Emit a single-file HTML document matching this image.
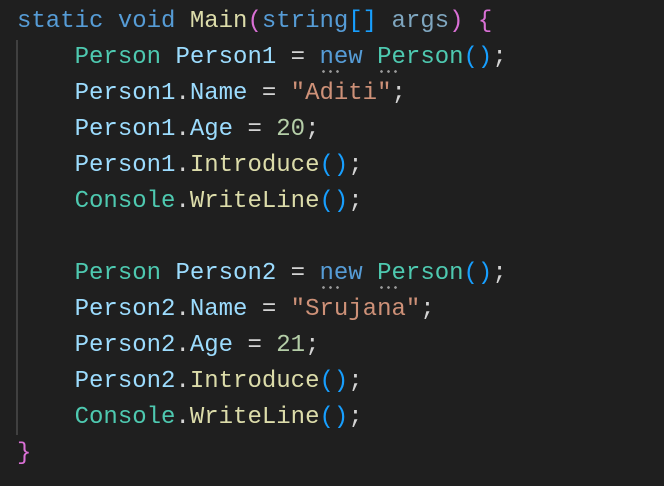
<!DOCTYPE html>
<html><head><meta charset="utf-8"><style>
html,body{margin:0;padding:0;background:#1f1f1f;width:664px;height:486px;overflow:hidden}
pre{margin:0;position:absolute;left:17px;top:4px;font-family:"Liberation Mono","DejaVu Sans Mono",monospace;font-size:24px;line-height:36px;color:#d4d4d4}
.k{color:#569cd6}.t{color:#4ec9b0}.v{color:#9cdcfe}.f{color:#dcdcaa}.s{color:#ce9178}.n{color:#b5cea8}
.p{color:#da70d6}.b{color:#179fff}.d{color:#7fa6bf}
.u{position:relative}.u::after{content:"";position:absolute;left:1px;top:26px;width:19px;height:3px;background:radial-gradient(circle,#9a9a9a 1.2px,transparent 1.5px) 0 0/7px 3px repeat-x}
.g{position:absolute;left:16px;top:40px;width:2px;height:395px;background:#404040}
</style></head><body>
<div class="g"></div>
<pre><span class="k">static</span> <span class="k">void</span> <span class="f">Main</span><span class="p">(</span><span class="k">string</span><span class="b">[]</span> <span class="d">args</span><span class="p">)</span> <span class="p">{</span>
    <span class="t">Person</span> <span class="v">Person1</span> = <span class="k u">new</span> <span class="t u">Person</span><span class="b">()</span>;
    <span class="v">Person1</span>.<span class="v">Name</span> = <span class="s">"Aditi"</span>;
    <span class="v">Person1</span>.<span class="v">Age</span> = <span class="n">20</span>;
    <span class="v">Person1</span>.<span class="f">Introduce</span><span class="b">()</span>;
    <span class="t">Console</span>.<span class="f">WriteLine</span><span class="b">()</span>;

    <span class="t">Person</span> <span class="v">Person2</span> = <span class="k u">new</span> <span class="t u">Person</span><span class="b">()</span>;
    <span class="v">Person2</span>.<span class="v">Name</span> = <span class="s">"Srujana"</span>;
    <span class="v">Person2</span>.<span class="v">Age</span> = <span class="n">21</span>;
    <span class="v">Person2</span>.<span class="f">Introduce</span><span class="b">()</span>;
    <span class="t">Console</span>.<span class="f">WriteLine</span><span class="b">()</span>;
<span class="p">}</span></pre>
</body></html>
